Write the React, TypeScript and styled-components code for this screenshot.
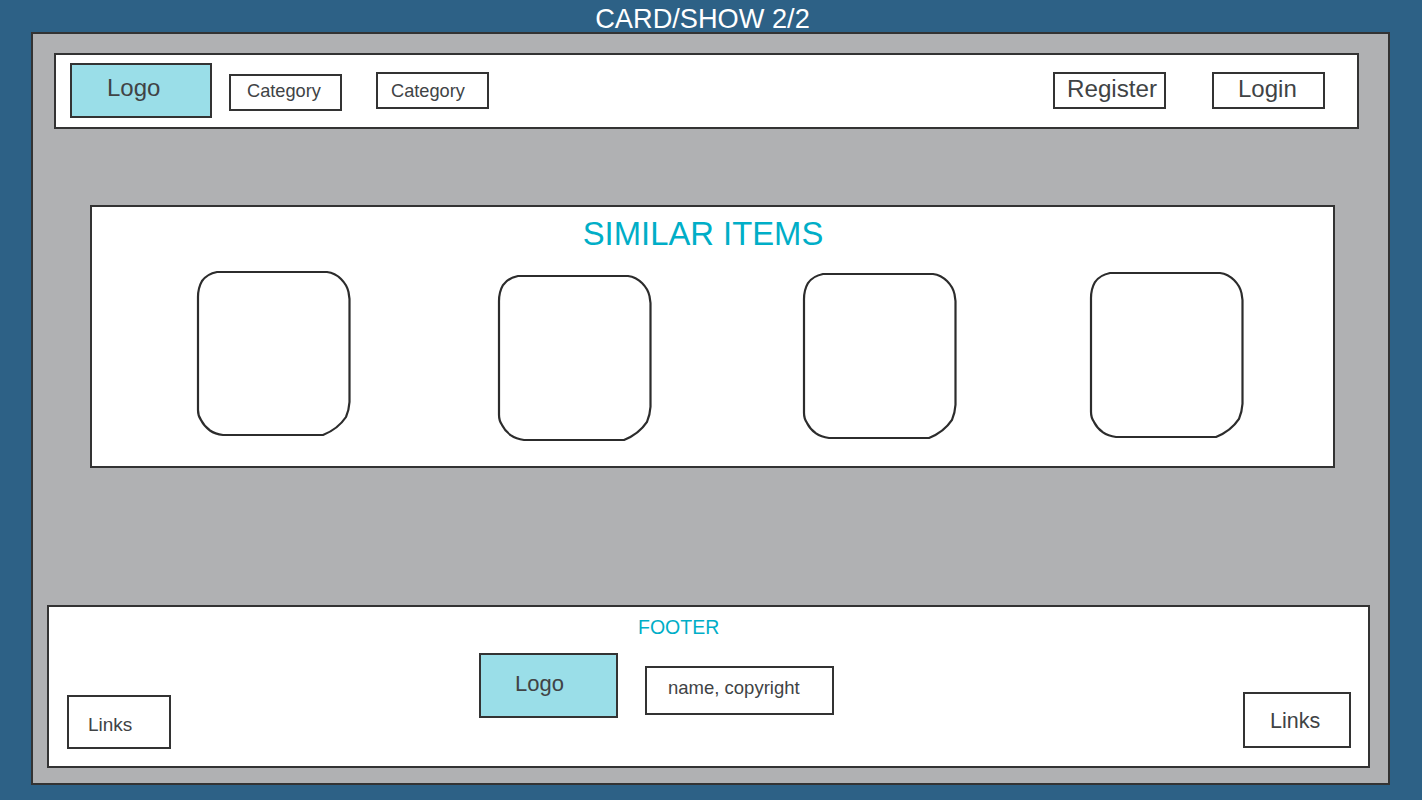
import React from "react";
import styled, { createGlobalStyle } from "styled-components";

const GlobalStyle = createGlobalStyle`
  html, body {
    margin: 0;
    padding: 0;
    background: #2d6186;
  }
  body {
    font-family: "Liberation Sans", Arial, sans-serif;
    color: #404345;
  }
`;

const Page = styled.div`
  width: 1422px;
  height: 800px;
  overflow: hidden;
  background: #2d6186;
`;

const PageTitle = styled.div`
  height: 32px;
  padding-right: 17px;
  text-align: center;
  font-size: 27.2px;
  line-height: 38px;
  color: #fff;
`;

const Canvas = styled.div`
  box-sizing: border-box;
  width: 1359px;
  height: 753px;
  margin-left: 31px;
  border: 2px solid #333;
  background: #b0b1b3;
  display: flex;
  flex-direction: column;
  align-items: flex-start;
`;

const Outlined = styled.div`
  box-sizing: border-box;
  border: 2px solid #333;
  background: #fff;
`;

const Header = styled(Outlined)`
  width: 1305px;
  height: 76px;
  margin: 19px 0 0 21px;
  display: flex;
  align-items: flex-start;
`;

const LabelBox = styled(Outlined)<{
  $w: number;
  $h: number;
  $left: number;
  $top: number;
  $pad: number;
  $size: number;
  $lift?: number;
  $drop?: number;
  $logo?: boolean;
}>`
  flex: none;
  width: ${(p) => p.$w}px;
  height: ${(p) => p.$h}px;
  margin-left: ${(p) => p.$left}px;
  margin-top: ${(p) => p.$top}px;
  padding-left: ${(p) => p.$pad}px;
  padding-bottom: ${(p) => p.$lift ?? 0}px;
  padding-top: ${(p) => p.$drop ?? 0}px;
  font-size: ${(p) => p.$size}px;
  background: ${(p) => (p.$logo ? "#9adee8" : "#fff")};
  display: flex;
  align-items: center;
  white-space: nowrap;
`;

const SimilarSection = styled(Outlined)`
  width: 1245px;
  height: 263px;
  margin: 76px 0 0 57px;
`;

const SectionHeading = styled.div`
  height: 52px;
  padding-right: 19px;
  text-align: center;
  font-size: 32.8px;
  line-height: 54px;
  color: #00aec7;
`;

const CardRow = styled.div`
  display: flex;
  align-items: flex-start;
`;

const ItemCard = styled.div<{ $left: number; $top: number; $h: number }>`
  flex: none;
  width: 153px;
  height: ${(p) => p.$h}px;
  margin-left: ${(p) => p.$left}px;
  margin-top: ${(p) => p.$top}px;

  svg {
    display: block;
    width: 100%;
    height: 100%;
    overflow: visible;
  }
`;

const Footer = styled(Outlined)`
  width: 1323px;
  height: 163px;
  margin: 137px 0 0 14px;
`;

const FooterHeading = styled.div`
  height: 38px;
  padding-left: 589px;
  font-size: 19.5px;
  line-height: 40px;
  color: #00aec7;
`;

const FooterRow = styled.div`
  display: flex;
  align-items: flex-start;
`;

const cards = [
  { left: 105, top: 12, h: 165 },
  { left: 148, top: 16, h: 166 },
  { left: 152, top: 14, h: 166 },
  { left: 134, top: 13, h: 166 },
];

// hand-sketched outline, corners are a bit uneven in the wireframe
const SketchOutline = () => (
  <svg viewBox="0 0 153 165" preserveAspectRatio="none">
    <path
      d="M20 1 L130 1 Q138 2 144 8 Q150 14 151.5 21 L152.5 28 L152.5 131 Q152 139 149 146 Q141 158 126 164 L26 164 Q18 163 13 159.5 Q7 155 4 149 Q1 145 1 139 L1 26 Q1 17 5 10 Q10 3 20 1 Z"
      fill="none"
      stroke="#2c2c2c"
      strokeWidth="2.2"
      strokeLinejoin="round"
    />
  </svg>
);

export default function App() {
  return (
    <Page>
      <GlobalStyle />
      <PageTitle>CARD/SHOW 2/2</PageTitle>
      <Canvas>
        <Header>
          <LabelBox $logo $w={142} $h={55} $left={14} $top={8} $pad={35} $size={24} $lift={5}>
            Logo
          </LabelBox>
          <LabelBox $w={113} $h={37} $left={17} $top={19} $pad={16} $size={18.2} $lift={2}>
            Category
          </LabelBox>
          <LabelBox $w={113} $h={37} $left={34} $top={17} $pad={13} $size={18.2} $drop={2}>
            Category
          </LabelBox>
          <LabelBox $w={113} $h={37} $left={564} $top={17} $pad={12} $size={24.2} $lift={4}>
            Register
          </LabelBox>
          <LabelBox $w={113} $h={37} $left={46} $top={17} $pad={24} $size={24} $lift={4}>
            Login
          </LabelBox>
        </Header>

        <SimilarSection>
          <SectionHeading>SIMILAR ITEMS</SectionHeading>
          <CardRow>
            {cards.map((c, i) => (
              <ItemCard key={i} $left={c.left} $top={c.top} $h={c.h}>
                <SketchOutline />
              </ItemCard>
            ))}
          </CardRow>
        </SimilarSection>

        <Footer>
          <FooterHeading>FOOTER</FooterHeading>
          <FooterRow>
            <LabelBox $w={104} $h={54} $left={18} $top={50} $pad={19} $size={19} $drop={5}>
              Links
            </LabelBox>
            <LabelBox $logo $w={139} $h={65} $left={308} $top={8} $pad={34} $size={22} $lift={3}>
              Logo
            </LabelBox>
            <LabelBox $w={189} $h={49} $left={27} $top={21} $pad={21} $size={18.5} $lift={6}>
              name, copyright
            </LabelBox>
            <LabelBox $w={108} $h={56} $left={409} $top={47} $pad={25} $size={21.5} $drop={2}>
              Links
            </LabelBox>
          </FooterRow>
        </Footer>
      </Canvas>
    </Page>
  );
}
